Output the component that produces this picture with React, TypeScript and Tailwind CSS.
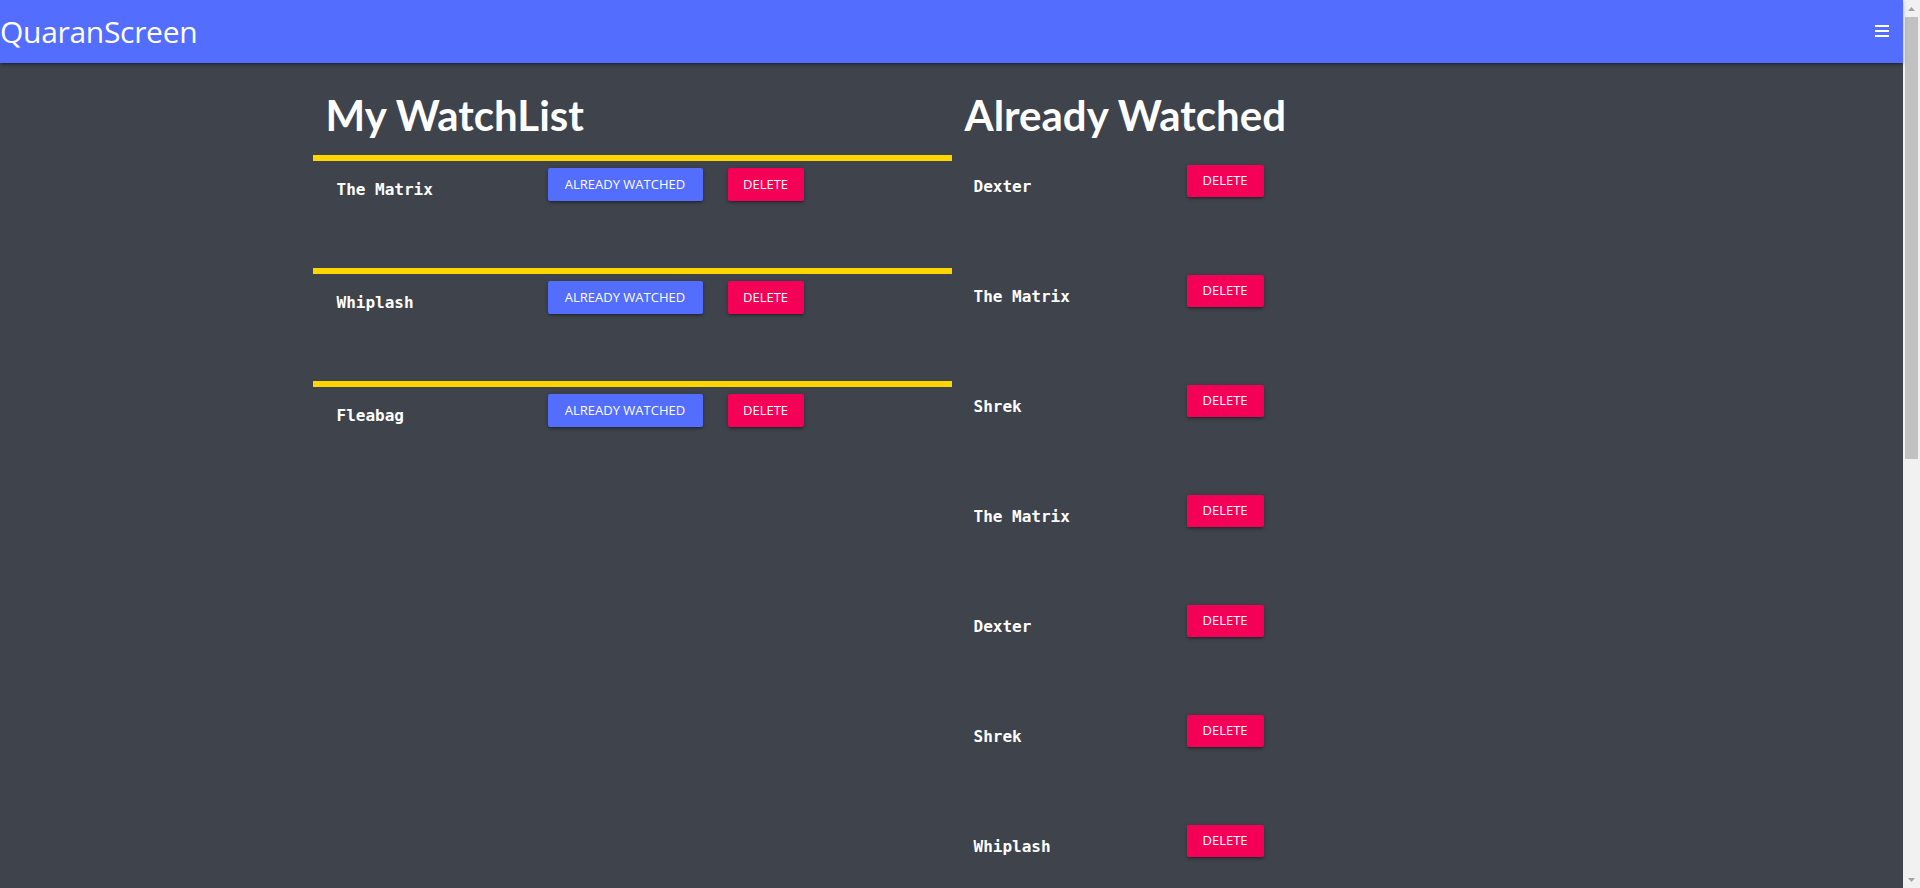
import React from "react";

const watchList = ["The Matrix", "Whiplash", "Fleabag"];

const watched = [
  "Dexter",
  "The Matrix",
  "Shrek",
  "The Matrix",
  "Dexter",
  "Shrek",
  "Whiplash",
  "Fleabag",
  "The Matrix",
  "Dexter",
  "Shrek",
  "Whiplash",
  "Fleabag",
  "Dexter",
];

const btnShadow =
  "shadow-[0_2px_2px_0_rgba(0,0,0,0.14),0_3px_1px_-2px_rgba(0,0,0,0.12),0_1px_5px_0_rgba(0,0,0,0.2)]";

function MenuIcon() {
  return (
    <svg width="14" height="12" viewBox="0 0 14 12" fill="#fff">
      <rect x="0" y="0" width="14" height="2" />
      <rect x="0" y="5" width="14" height="2" />
      <rect x="0" y="10" width="14" height="2" />
    </svg>
  );
}

function Navbar() {
  return (
    <header className="relative z-10 h-[63px] bg-[#536dfe] shadow-[0_2px_2px_0_rgba(0,0,0,0.14),0_3px_1px_-2px_rgba(0,0,0,0.12),0_1px_5px_0_rgba(0,0,0,0.2)]">
      <nav className="flex h-full items-center justify-between text-white">
        <span className="text-[30px] leading-none tracking-[-0.3px]">QuaranScreen</span>
        <div className="mr-[14px] mb-[1px]">
          <MenuIcon />
        </div>
      </nav>
    </header>
  );
}

// window scrollbar as it shows in the capture
function ScrollBar() {
  return (
    <aside className="flex h-screen w-[17px] shrink-0 flex-col bg-[#f1f1f1]">
      <div className="flex h-[17px] items-center justify-center">
        <svg width="7" height="4" viewBox="0 0 7 4" fill="#a3a3a3">
          <path d="M0 4 3.5 0 7 4z" />
        </svg>
      </div>
      <div className="mx-[2px] h-[442px] bg-[#c1c1c1]" />
      <div className="flex-1" />
      <div className="flex h-[17px] items-center justify-center">
        <svg width="7" height="4" viewBox="0 0 7 4" fill="#a3a3a3">
          <path d="M0 0 3.5 4 7 0z" />
        </svg>
      </div>
    </aside>
  );
}

function Title({ text }: { text: string }) {
  return (
    <h1 className="h-[92px] pl-[13px] pt-[31px] font-['Lato',sans-serif] text-[42px] font-bold leading-[42px] text-white">
      {text}
    </h1>
  );
}

function WatchRow({ name }: { name: string }) {
  return (
    <li className="flex h-[113px] items-start border-t-[6px] border-[#ffd600]">
      <span className="mt-[17px] w-[235px] pl-[24px] font-['DejaVu_Sans_Mono',monospace] text-[16px] font-bold leading-[24px] text-white">
        {name}
      </span>
      <button
        className={`mt-[7px] flex h-[33px] w-[155px] items-center justify-center rounded-[2px] bg-[#536dfe] text-[13px] uppercase text-white ${btnShadow}`}
      >
        Already watched
      </button>
      <button
        className={`ml-[25px] mt-[7px] flex h-[33px] w-[76px] items-center justify-center rounded-[2px] bg-[#f50057] text-[13px] uppercase text-white ${btnShadow}`}
      >
        Delete
      </button>
    </li>
  );
}

function WatchedRow({ name }: { name: string }) {
  return (
    <li className="flex h-[110px] items-start">
      <span className="mt-[20px] w-[235px] pl-[22px] font-['DejaVu_Sans_Mono',monospace] text-[16px] font-bold leading-[24px] text-white">
        {name}
      </span>
      <button
        className={`mt-[10px] flex h-[32px] w-[77px] items-center justify-center rounded-[2px] bg-[#f50057] text-[13px] uppercase text-white ${btnShadow}`}
      >
        Delete
      </button>
    </li>
  );
}

export default function App() {
  return (
    <div className="flex h-screen overflow-hidden bg-[#3e434c] font-['Open_Sans',sans-serif]">
      <div className="min-w-0 flex-1">
        <Navbar />
        <main className="mx-auto flex w-[1278px]">
          <section className="w-[639px]">
            <Title text="My WatchList" />
            <ul>
              {watchList.map((item) => (
                <WatchRow key={item} name={item} />
              ))}
            </ul>
          </section>
          <section className="w-[639px]">
            <Title text="Already Watched" />
            <ul>
              {watched.map((item, i) => (
                <WatchedRow key={i} name={item} />
              ))}
            </ul>
          </section>
        </main>
      </div>
      <ScrollBar />
    </div>
  );
}
